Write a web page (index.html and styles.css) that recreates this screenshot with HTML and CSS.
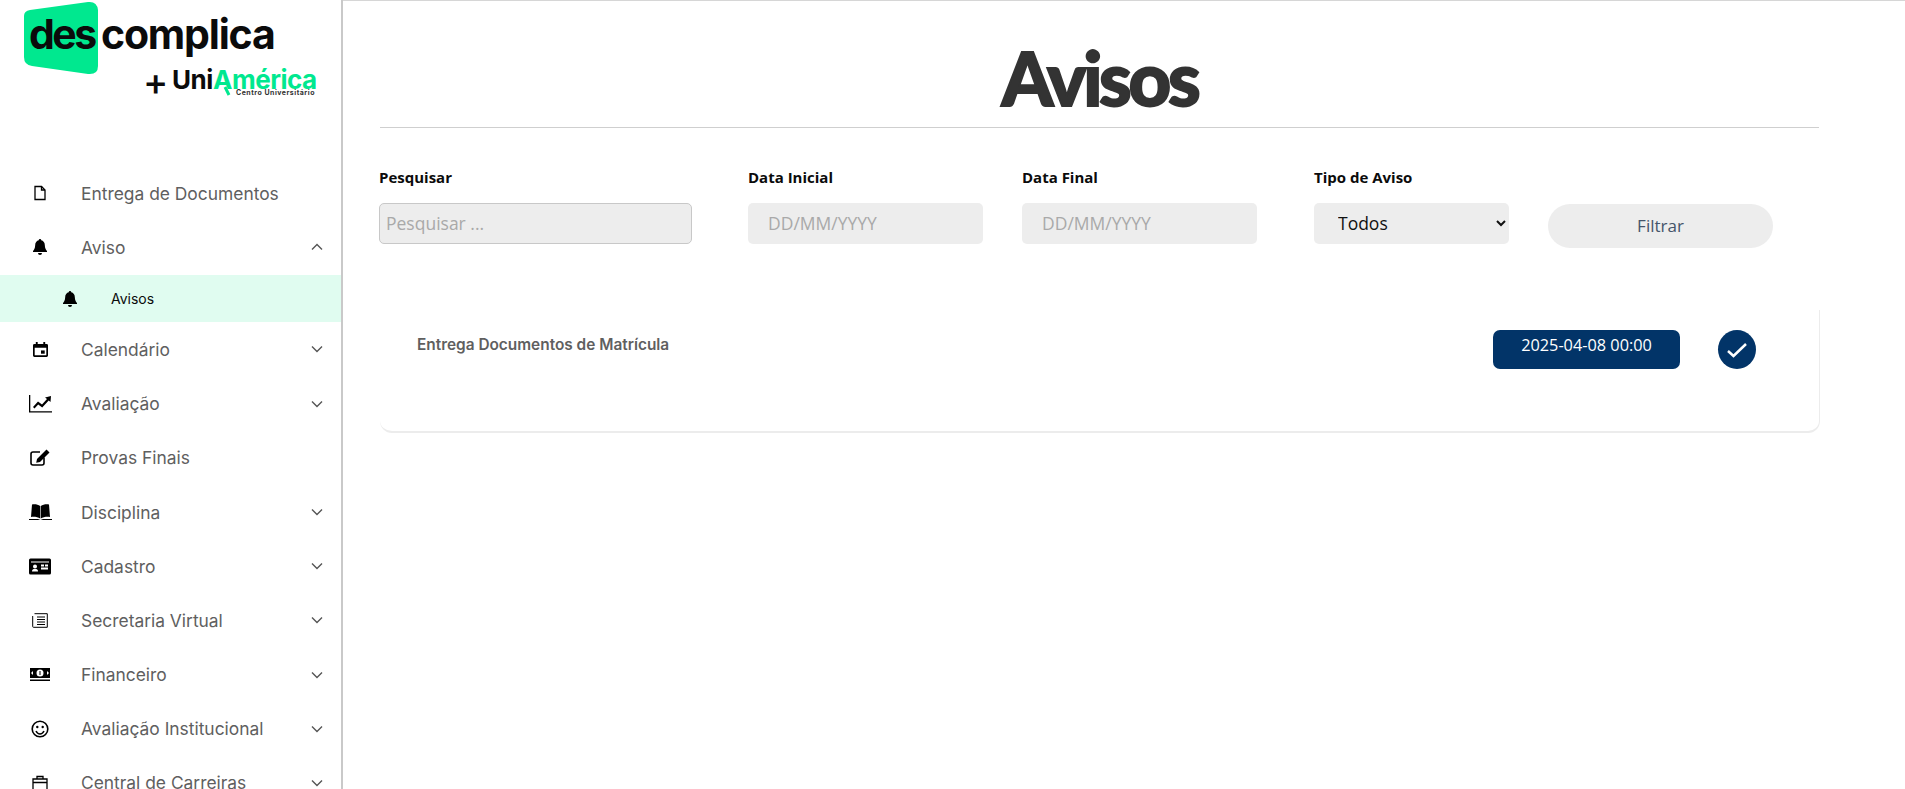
FILE: index.html
```html
<!DOCTYPE html>
<html lang="pt-BR">
<head>
<meta charset="utf-8">
<title>Avisos</title>
<link rel="stylesheet" href="styles.css">
</head>
<body>
<div class="app">
  <aside class="sidebar">
    <div class="logo">
      <svg width="320" height="110" viewBox="0 0 320 110">
        <path class="logo-green" d="M24 16 Q24 11 30 10 L88 2 Q97 1 98 10 L98 66 Q98 75 88 74 L32 66 Q24 65 24 57 Z"/>
        <text class="logo-des" x="29" y="49">des</text>
        <text class="logo-comp" x="101" y="49">complica</text>
        <text class="logo-plus" x="143" y="95">+</text>
        <text class="logo-uni" x="172" y="89">Uni</text>
        <text class="logo-am" x="213" y="89">América</text>
        <path class="logo-leg" d="M225 87 L229 95"/>
        <text class="logo-cu" x="236" y="95">Centro Universitário</text>
      </svg>
    </div>
    <nav class="menu">
      <a class="item"><span class="ic"><svg width="14" height="16" viewBox="0 0 14 16"><path class="ol" d="M2 1.500h6.500L12 5v9.500H2z"/><path class="ol" d="M8.500 1.500V5H12"/></svg></span><span class="label">Entrega de Documentos</span></a>
      <a class="item"><span class="ic"><svg width="16" height="16" viewBox="0 0 16 16"><path d="M8 0a1.200 1.200 0 0 0-1.200 1.300C4.600 1.800 3.200 3.600 3.200 6c0 3.700-1.500 5-2.200 6v1h14v-1c-.7-1-2.200-2.300-2.200-6 0-2.400-1.400-4.200-3.600-4.700A1.200 1.200 0 0 0 8 0zM6 14a2 2 0 0 0 4 0z"/></svg></span><span class="label">Aviso</span><svg class="chev" width="12" height="8" viewBox="0 0 12 8"><path class="ol" d="M1 6.500l5-5 5 5"/></svg></a>
      <a class="item sub"><span class="ic"><svg width="16" height="16" viewBox="0 0 16 16"><path d="M8 0a1.200 1.200 0 0 0-1.200 1.300C4.600 1.800 3.200 3.600 3.200 6c0 3.700-1.500 5-2.200 6v1h14v-1c-.7-1-2.200-2.300-2.200-6 0-2.400-1.400-4.200-3.600-4.700A1.200 1.200 0 0 0 8 0zM6 14a2 2 0 0 0 4 0z"/></svg></span><span class="label">Avisos</span></a>
      <a class="item"><span class="ic"><svg width="15" height="15" viewBox="0 0 16 16"><path fill-rule="evenodd" d="M3 0h2v2h6V0h2v2h1.500A1.500 1.500 0 0 1 16 3.500v11a1.500 1.500 0 0 1-1.500 1.500h-13A1.500 1.500 0 0 1 0 14.500v-11A1.500 1.500 0 0 1 1.500 2H3zM1.800 6v8.200h12.400V6z"/><path d="M8.500 9h4v3.500h-4z"/></svg></span><span class="label">Calendário</span><svg class="chev" width="12" height="8" viewBox="0 0 12 8"><path class="ol" d="M1 1.500l5 5 5-5"/></svg></a>
      <a class="item"><span class="ic"><svg width="23" height="18" viewBox="0 0 23 18"><path d="M0 0h1.300v16.200H23v1.300H0z"/><path d="M4 12l5-5.500 4 3 5-5.500-2-1.500L22 1l-.5 6-1.800-1.500-6.500 7-4-3L5.500 13.500z"/></svg></span><span class="label">Avaliação</span><svg class="chev" width="12" height="8" viewBox="0 0 12 8"><path class="ol" d="M1 1.500l5 5 5-5"/></svg></a>
      <a class="item"><span class="ic"><svg width="20" height="17" viewBox="0 0 20 17"><path class="ol2" d="M14 8.500v5.500a2 2 0 0 1-2 2H3a2 2 0 0 1-2-2V5a2 2 0 0 1 2-2h7"/><path d="M16.500 .5l3 3L10 13l-3.800.8L7 10z"/></svg></span><span class="label">Provas Finais</span></a>
      <a class="item"><span class="ic"><svg width="23" height="16" viewBox="0 0 23 16"><path d="M11.200 2C9 .5 6 0 3 .5L2 13c3-.5 7 0 9.200 1.500zM11.800 2c2.200-1.500 5.200-2 8.200-1.500L21 13c-3-.5-7 0-9.200 1.500z"/><path d="M1 3 0 15h9l2.500 1 2.500-1h9L22 3l1 12v1H0v-1z"/></svg></span><span class="label">Disciplina</span><svg class="chev" width="12" height="8" viewBox="0 0 12 8"><path class="ol" d="M1 1.500l5 5 5-5"/></svg></a>
      <a class="item"><span class="ic"><svg width="22" height="17" viewBox="0 0 22 16"><path fill-rule="evenodd" d="M1.500 0h19A1.500 1.500 0 0 1 22 1.500v13a1.500 1.500 0 0 1-1.500 1.500h-19A1.500 1.500 0 0 1 0 14.500v-13A1.500 1.500 0 0 1 1.500 0zM2 3v1h18V3zM6 6a2 2 0 1 0 0 4 2 2 0 0 0 0-4zM3 13h6c0-2-1-2.500-3-2.500S3 11 3 13zM12 6v2h3V6zM16 6v2h3V6zM12 9v2h7V9z"/></svg></span><span class="label">Cadastro</span><svg class="chev" width="12" height="8" viewBox="0 0 12 8"><path class="ol" d="M1 1.500l5 5 5-5"/></svg></a>
      <a class="item"><span class="ic"><svg width="16" height="15" viewBox="0 0 16 15"><path class="thin" d="M2.500 .7h12.800v13.600H1.500a.8.8 0 0 1-.8-.8V3"/><path class="thin" d="M5 4h8M5 6.500h8M5 9h8M5 11.500h8"/></svg></span><span class="label">Secretaria Virtual</span><svg class="chev" width="12" height="8" viewBox="0 0 12 8"><path class="ol" d="M1 1.500l5 5 5-5"/></svg></a>
      <a class="item"><span class="ic"><svg width="20" height="13" viewBox="0 0 20 13"><path fill-rule="evenodd" d="M0 0h20v10H0zM10 1.500a3.500 3.500 0 1 0 0 7 3.500 3.500 0 0 0 0-7zM3 3 1 5l2 2zM17 3v4l2-2zM9.500 3h1v4h-1z"/><path d="M0 11.500h20V13H0z"/></svg></span><span class="label">Financeiro</span><svg class="chev" width="12" height="8" viewBox="0 0 12 8"><path class="ol" d="M1 1.500l5 5 5-5"/></svg></a>
      <a class="item"><span class="ic"><svg width="18" height="18" viewBox="0 0 18 18"><circle class="ol2" cx="9" cy="9" r="7.800"/><circle cx="6.300" cy="7" r="1.200"/><circle cx="11.700" cy="7" r="1.200"/><path class="ol2" d="M5 11c1 2 2.500 3 4 3s3-1 4-3"/></svg></span><span class="label">Avaliação Institucional</span><svg class="chev" width="12" height="8" viewBox="0 0 12 8"><path class="ol" d="M1 1.500l5 5 5-5"/></svg></a>
      <a class="item"><span class="ic"><svg width="16" height="16" viewBox="0 0 16 16"><path class="ol" d="M1 4h14v11H1zM5 4V1.500h6V4M1 7.500h14"/></svg></span><span class="label">Central de Carreiras</span><svg class="chev" width="12" height="8" viewBox="0 0 12 8"><path class="ol" d="M1 1.500l5 5 5-5"/></svg></a>
    </nav>
  </aside>
  <main class="main">
    <h1 class="title">Avisos</h1>
    <form class="filters">
      <div class="field f-search"><label>Pesquisar</label><input class="search" placeholder="Pesquisar ..."></div>
      <div class="field f-date"><label>Data Inicial</label><input class="date" placeholder="DD/MM/YYYY"></div>
      <div class="field f-date2"><label>Data Final</label><input class="date" placeholder="DD/MM/YYYY"></div>
      <div class="field f-type"><label>Tipo de Aviso</label><select class="type"><option>Todos</option></select></div>
      <button type="button" class="filter">Filtrar</button>
    </form>
    <section class="card">
      <span class="card-title">Entrega Documentos de Matrícula</span>
      <span class="badge">2025-04-08 00:00</span>
      <span class="check"><svg width="22" height="16" viewBox="0 0 22 16"><path d="M2 9l5.500 5L20 2"/></svg></span>
    </section>
  </main>
</div>
</body>
</html>
```
FILE: styles.css
```css
* { box-sizing: border-box; }
html, body { margin: 0; height: 100%; overflow: hidden; background: #fff; }
.app { display: flex; height: 789px; overflow: hidden; }
.sidebar { width: 343px; flex: none; border-right: 2px solid #c9c9c9; overflow: hidden; }
.logo { height: 166px; }
.logo svg { display: block; }
.logo-green { fill: #00e88f; }
.logo-des, .logo-comp { font: 700 41px "Inter", sans-serif; fill: #0b0b0b; }
.logo-des { letter-spacing: -2.500px; }
.logo-comp { letter-spacing: -1.200px; }
.logo-plus { font: 500 38px "Inter", sans-serif; fill: #0b0b0b; }
.logo-uni, .logo-am { font: 700 26px "Inter", sans-serif; letter-spacing: -.5px; }
.logo-uni { fill: #0b0b0b; }
.logo-am { fill: #00e88f; }
.logo-leg { fill: none; stroke: #00e88f; stroke-width: 3; }
.logo-cu { font: 700 7px "Inter", sans-serif; letter-spacing: .5px; fill: #333; }
.menu { display: flex; flex-direction: column; }
.item { display: flex; align-items: center; height: 54.200px; color: #5f5f5f; font: 400 17.400px "Inter", sans-serif; }
.item.sub { height: 47px; margin-top: 1px; background: #e0fcf0; color: #0b0b0b; font-size: 14px; }
.item.sub .ic { width: 46px; margin-left: 47px; }
.item.sub .label { margin-left: 18px; }
.ic { width: 40px; margin-left: 20px; display: flex; justify-content: center; flex: none; }
.ic svg { display: block; fill: #000; }
.label { margin-left: 21px; flex: 1; white-space: nowrap; }
.ol { fill: none; stroke: #000; stroke-width: 1.300; }
.ol2 { fill: none; stroke: #000; stroke-width: 1.600; }
.thin { fill: none; stroke: #000; stroke-width: 1; }
.chev { margin-right: 18px; }
.chev .ol { stroke: #555; stroke-width: 1.400; }
.main { flex: 1; padding: 0 86px 0 37px; border-top: 1px solid #d6d6d6; min-width: 0; }
.title { margin: 0; height: 127px; border-bottom: 1px solid #cfcfcf; text-align: center; font: 900 74px/1 "Lato", sans-serif; letter-spacing: -3.300px; color: #333; padding-top: 40px; -webkit-text-stroke: 1.800px #333; }
.filters { display: flex; align-items: flex-start; margin: 38px 0 0 -1px; }
.field { display: flex; flex-direction: column; }
.field label { font: 700 15px/22px "Open Sans", sans-serif; color: #0b0b0b; height: 37px; }
.f-search { width: 313px; margin-right: 56px; }
.f-date { width: 235px; margin-right: 39px; }
.f-date2 { width: 235px; margin-right: 57px; }
.f-type { width: 195px; margin-right: 39px; }
input, select { height: 41px; border: 0; border-radius: 5px; background: #ededed; font: 400 17.500px "Open Sans", sans-serif; outline: 0; width: 100%; }
input { padding-bottom: 2px; }
input::placeholder { color: #a9a9a9; opacity: 1; }
.search { border: 1px solid #c8c8c8; padding: 0 6px 2px; }
.date { padding: 0 20px 2px; }
.type { padding: 0 20px 2px; color: #111; }
.filter { width: 225px; height: 44px; margin-top: 38px; border: 0; border-radius: 22px; padding-bottom: 3px; background: #ededed; color: #44546a; font: 400 17px "Open Sans", sans-serif; }
.card { display: flex; align-items: flex-start; height: 123px; margin-top: 62px; width: 1440px; padding: 20px 63px 0 37px; border-radius: 0 0 12px 12px; border-right: 1px solid #ececec; border-bottom: 2px solid #ececec; }
.card-title { flex: 1; font: 600 15.400px/30px "Inter", sans-serif; color: #5f5f5f; }
.badge { width: 187px; height: 39px; border-radius: 7px; background: #023468; color: #fff; font: 400 16.300px/31px "Open Sans", sans-serif; text-align: center; margin-right: 38px; }
.check { width: 38px; height: 39px; border-radius: 50%; background: #023468; display: flex; align-items: center; justify-content: center; }
.check svg { fill: none; stroke: #fff; stroke-width: 2.500; }
```
